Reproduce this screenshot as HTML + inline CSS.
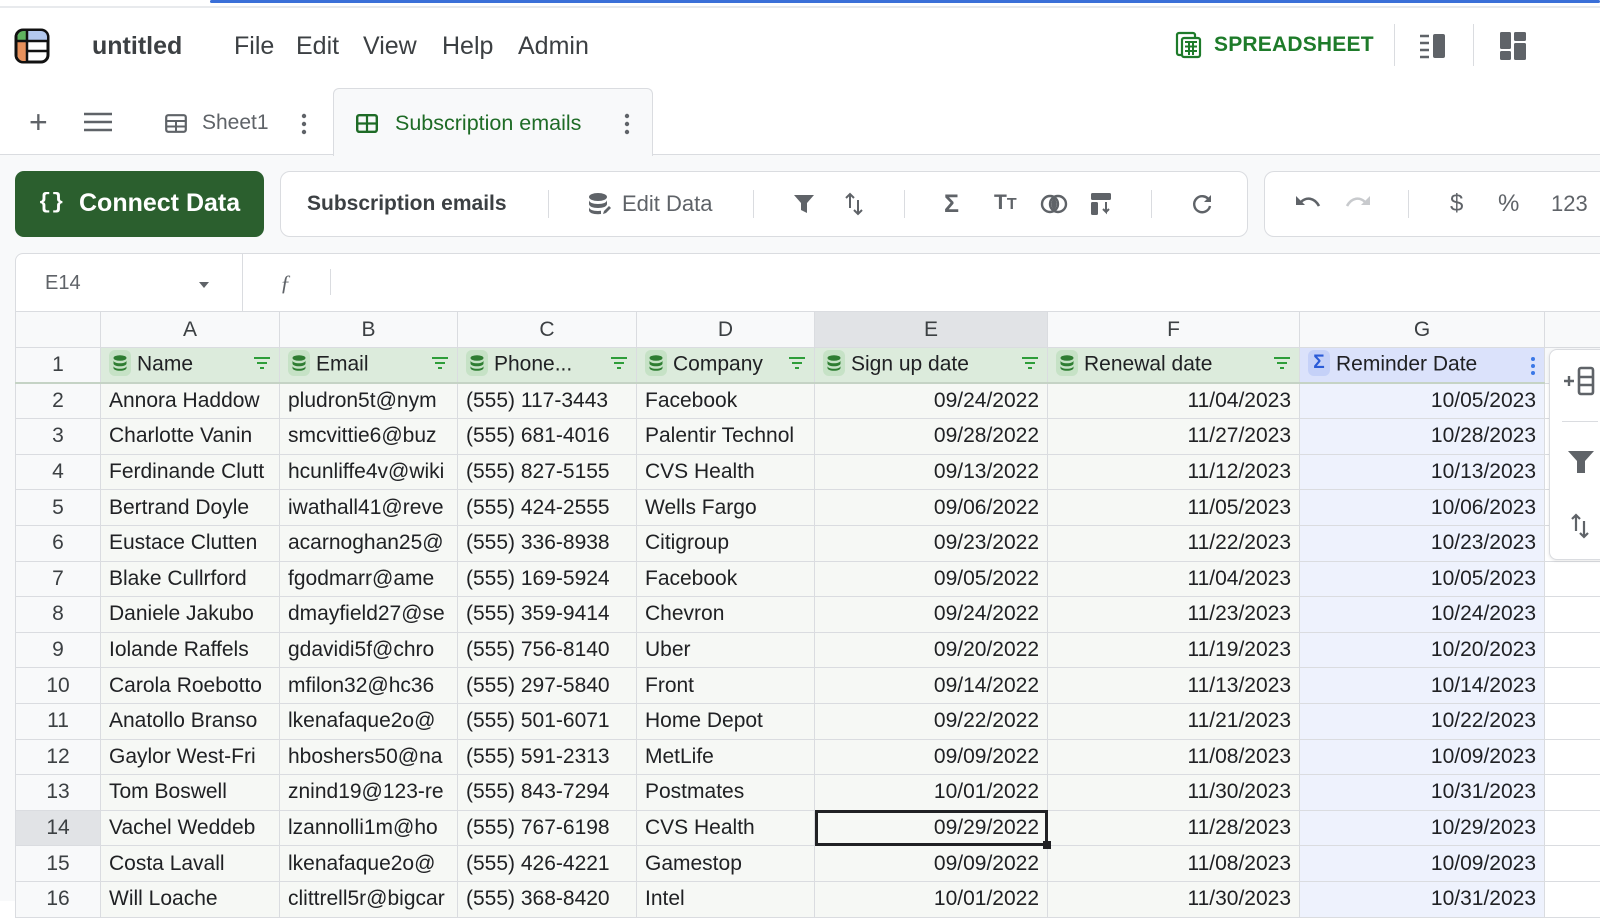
<!DOCTYPE html>
<html><head><meta charset="utf-8"><style>
*{box-sizing:border-box;margin:0;padding:0}
body{width:1600px;height:901px;overflow:hidden;background:#fff;font-family:"Liberation Sans",Arial,sans-serif;color:#202124;position:relative}
.a{position:absolute}
.menu{font-size:25px;color:#3c4043;top:32px}
.tb{color:#5f6368}
.vd{position:absolute;width:1px;background:#dadce0}
table{border-collapse:collapse;table-layout:fixed;position:absolute;left:15px;top:311px;width:1611px}
td{border:1px solid #dadce0;height:35.6px;font-size:21px;padding:0 8px;white-space:nowrap;overflow:hidden;background:#f6f8f5}
tr.ch td{background:#f8f9fa;text-align:center;height:36px;color:#3c4043}
td.rh{background:#f8f9fa;text-align:center;padding:0;color:#3c4043}
td.r{text-align:right}
td.g{background:#eef2fd}
tr.h1 td{background:#dcebdc;border-bottom:2px solid #c5d3c5}
tr.h1 td.rh{background:#f8f9fa}
tr.h1 td.gh{background:#dbe2fb}
.db{display:inline-block;width:22px;height:26px;border-radius:6px;background:#c6e2c6;vertical-align:middle;margin-right:6px;position:relative;top:-2px}
.db svg{position:absolute;left:4px;top:5px}
.flt{float:right;margin-top:4px}
</style></head><body>
<div class="a" style="left:210px;top:0;width:1390px;height:3px;background:#3a6fd8;border-radius:2px"></div>
<div class="a" style="left:0;top:6px;width:1600px;height:2px;background:#e8eaed"></div>
<svg class="a" style="left:14px;top:28px" width="36" height="36" viewBox="0 0 36 36">
<rect x="2" y="2" width="32" height="32" rx="7" fill="#fff" stroke="#111" stroke-width="3"/>
<path d="M3.5 13 V9 a6 6 0 0 1 6-6 H13 V13Z" fill="#5fb35f"/>
<path d="M13 3 H27 a6 6 0 0 1 6 6 V13 H13Z" fill="#b3c8ee"/>
<path d="M3.5 13 H13 V33 H9 a6 6 0 0 1-5.5-6Z" fill="#e8915c"/>
<path d="M13 3V34 M3 13H33 M13 23H33" stroke="#111" stroke-width="2.5"/>
</svg>
<div class="a" style="left:92px;top:32px;font-size:25px;font-weight:bold;color:#3c4043">untitled</div>
<div class="a menu" style="left:234px">File</div>
<div class="a menu" style="left:296px">Edit</div>
<div class="a menu" style="left:363px">View</div>
<div class="a menu" style="left:442px">Help</div>
<div class="a menu" style="left:518px">Admin</div>
<svg class="a" style="left:1175px;top:31px" width="28" height="28" viewBox="0 0 28 28"><rect x="2" y="2" width="18" height="22" rx="2" fill="none" stroke="#1e7b2a" stroke-width="2.2"/><rect x="7" y="7" width="18" height="19" rx="2" fill="#fff" stroke="#1e7b2a" stroke-width="2.2"/><path d="M10 11h12M10 15.5h12M10 20h12M14 11v13M18 11v13" stroke="#1e7b2a" stroke-width="2"/></svg>
<div class="a" style="left:1214px;top:33px;font-size:21px;font-weight:bold;color:#1e7b2a;letter-spacing:.2px">SPREADSHEET</div>
<div class="vd" style="left:1394px;top:24px;height:42px"></div>
<svg class="a" style="left:1419px;top:33px" width="28" height="26" viewBox="0 0 28 26"><path d="M1 3h9M1 10h9M1 17h9M1 24h9" stroke="#5f6368" stroke-width="2.4"/><rect x="14" y="1" width="12" height="24" rx="2" fill="#5f6368"/></svg>
<div class="vd" style="left:1473px;top:24px;height:42px"></div>
<svg class="a" style="left:1499px;top:31px" width="28" height="30" viewBox="0 0 28 30"><rect x="1" y="1" width="11" height="17" rx="1.5" fill="#5f6368"/><rect x="1" y="20" width="11" height="9" rx="1.5" fill="#5f6368"/><rect x="15" y="1" width="12" height="9" rx="1.5" fill="#5f6368"/><rect x="15" y="12" width="12" height="17" rx="1.5" fill="#5f6368"/></svg>
<div class="a" style="left:0;top:154px;width:1600px;height:747px;background:#f8f9fa;border-top:1px solid #dadce0"></div>
<div class="a" style="left:333px;top:88px;width:320px;height:68px;background:#f8f9fa;border:1px solid #dadce0;border-bottom:none;border-radius:6px 6px 0 0"></div>
<div class="a" style="left:29px;top:106px;font-size:32px;color:#5f6368;line-height:32px">+</div>
<svg class="a" style="left:84px;top:112px" width="28" height="20"><path d="M0 2h28M0 10h28M0 18h28" stroke="#5f6368" stroke-width="2.5"/></svg>
<svg class="a" style="left:165px;top:114px" width="22" height="19" viewBox="0 0 22 19"><rect x="1.2" y="1.2" width="19.6" height="16.6" rx="2" fill="none" stroke="#5f6368" stroke-width="2.2"/><path d="M1 7h20M11 7v11M1 12.5h20" stroke="#5f6368" stroke-width="2"/></svg>
<div class="a" style="left:202px;top:111px;font-size:21px;color:#5f6368">Sheet1</div>
<svg class="a" style="left:301px;top:113px" width="6" height="22"><circle cx="3" cy="3" r="2.2" fill="#5f6368"/><circle cx="3" cy="11" r="2.2" fill="#5f6368"/><circle cx="3" cy="19" r="2.2" fill="#5f6368"/></svg>
<svg class="a" style="left:356px;top:114px" width="22" height="19" viewBox="0 0 22 19"><rect x="1.2" y="1.2" width="19.6" height="16.6" rx="2" fill="none" stroke="#1e6b26" stroke-width="2.4"/><path d="M1 9.5h20M11 1v17" stroke="#1e6b26" stroke-width="2.2"/></svg>
<div class="a" style="left:395px;top:111px;font-size:21.5px;color:#1e6b26">Subscription emails</div>
<svg class="a" style="left:624px;top:113px" width="6" height="22"><circle cx="3" cy="3" r="2.2" fill="#5f6368"/><circle cx="3" cy="11" r="2.2" fill="#5f6368"/><circle cx="3" cy="19" r="2.2" fill="#5f6368"/></svg>
<div class="a" style="left:15px;top:171px;width:249px;height:66px;background:#2b5f2e;border-radius:9px"></div>
<div class="a" style="left:38px;top:190px;font-size:22px;color:#fff;font-weight:bold;font-family:'Liberation Mono',monospace">{}</div>
<div class="a" style="left:79px;top:189px;font-size:25px;color:#fff;font-weight:bold">Connect Data</div>
<div class="a" style="left:280px;top:171px;width:968px;height:66px;background:#fff;border:1px solid #dadce0;border-radius:10px"></div>
<div class="a" style="left:1264px;top:171px;width:360px;height:66px;background:#fff;border:1px solid #dadce0;border-radius:10px"></div>
<div class="a" style="left:307px;top:192px;font-size:21px;font-weight:bold;color:#3c4043">Subscription emails</div>
<div class="vd" style="left:548px;top:190px;height:28px"></div>
<svg class="a" style="left:588px;top:192px" width="24" height="24" viewBox="0 0 24 24"><ellipse cx="10" cy="5" rx="9" ry="4" fill="#5f6368"/><path d="M1 8c0 2.5 4 4 9 4s9-1.5 9-4v4c0 2.5-4 4-9 4s-9-1.5-9-4z M1 15c0 2.5 4 4 9 4 1 0 2 0 3-.2V22c-1 .2-2 .2-3 .2-5 0-9-1.5-9-4z" fill="#5f6368"/><path d="M15 22l1-3 5-5 2 2-5 5z" fill="#5f6368"/></svg>
<div class="a tb" style="left:622px;top:191px;font-size:22px">Edit Data</div>
<div class="vd" style="left:753px;top:190px;height:28px"></div>
<svg class="a" style="left:794px;top:194px" width="20" height="20" viewBox="0 0 20 20"><path d="M0 1h20l-7 8v10l-6-3V9z" fill="#5f6368"/></svg>
<svg class="a" style="left:845px;top:192px" width="18" height="24" viewBox="0 0 18 24"><path d="M5 16V2M1 6l4-4 4 4M13 8v14M9 18l4 4 4-4" stroke="#5f6368" stroke-width="2" fill="none"/></svg>
<div class="vd" style="left:904px;top:190px;height:28px"></div>
<div class="a tb" style="left:944px;top:190px;font-size:25px;font-weight:bold">Σ</div>
<div class="a tb" style="left:994px;top:191px;font-size:21px;font-weight:bold">T<span style="font-size:16px">T</span></div>
<svg class="a" style="left:1040px;top:193px" width="28" height="22" viewBox="0 0 28 22"><circle cx="10" cy="11" r="8" fill="none" stroke="#5f6368" stroke-width="2.4"/><circle cx="18" cy="11" r="8" fill="none" stroke="#5f6368" stroke-width="2.4"/><path d="M14 5a8 8 0 0 1 0 12a8 8 0 0 1 0-12z" fill="#5f6368"/></svg>
<svg class="a" style="left:1090px;top:192px" width="22" height="24" viewBox="0 0 22 24"><rect x="1" y="1" width="20" height="7" rx="1.5" fill="#5f6368"/><rect x="1" y="10" width="7" height="13" rx="1.5" fill="#5f6368"/><path d="M16 10v10l-3-3M16 20l3-3" stroke="#5f6368" stroke-width="2" fill="none"/></svg>
<div class="vd" style="left:1151px;top:190px;height:28px"></div>
<svg class="a" style="left:1191px;top:193px" width="22" height="22" viewBox="0 0 22 22"><path d="M18 7A8 8 0 1 0 19 13" stroke="#5f6368" stroke-width="2.4" fill="none"/><path d="M20 2v7h-7z" fill="#5f6368"/></svg>
<svg class="a" style="left:1295px;top:194px" width="26" height="18" viewBox="0 0 26 18"><path d="M6 8c5-5 13-5 18 4" stroke="#5f6368" stroke-width="2.6" fill="none"/><path d="M1 2v9h9z" fill="#5f6368"/></svg>
<svg class="a" style="left:1345px;top:194px" width="26" height="18" viewBox="0 0 26 18"><path d="M20 8c-5-5-13-5-18 4" stroke="#c8cacd" stroke-width="2.6" fill="none"/><path d="M25 2v9h-9z" fill="#c8cacd"/></svg>
<div class="vd" style="left:1408px;top:190px;height:28px"></div>
<div class="a tb" style="left:1450px;top:190px;font-size:24px">$</div>
<div class="a tb" style="left:1498px;top:190px;font-size:24px">%</div>
<div class="a tb" style="left:1551px;top:191px;font-size:22px">123</div>
<div class="a" style="left:15px;top:253px;width:1600px;height:59px;background:#fff;border:1px solid #dadce0;border-radius:8px 0 0 0"></div>
<div class="vd" style="left:242px;top:254px;height:57px"></div>
<div class="a" style="left:45px;top:272px;font-size:20px;color:#5f6368">E14</div>
<div class="a" style="left:199px;top:282px;width:0;height:0;border-left:5px solid transparent;border-right:5px solid transparent;border-top:6px solid #5f6368"></div>
<div class="a" style="left:280px;top:270px;font-size:22px;color:#5f6368;font-style:italic;font-family:'Liberation Serif',serif">ƒ</div>
<div class="vd" style="left:330px;top:269px;height:26px"></div>
<table>
<colgroup><col style="width:85px"><col style="width:179px"><col style="width:178px"><col style="width:179px"><col style="width:178px"><col style="width:233px"><col style="width:252px"><col style="width:245px"><col style="width:82px"></colgroup>
<tr class="ch"><td class="rh"></td><td>A</td><td>B</td><td>C</td><td>D</td><td style="background:#e1e3e6">E</td><td>F</td><td>G</td><td></td></tr>
<tr class="h1"><td class="rh">1</td>
<td><span class="db"><svg width="14" height="16" viewBox="0 0 14 16"><ellipse cx="7" cy="3" rx="6.5" ry="2.8" fill="#2e7d32"/><path d="M.5 5.5c0 1.6 3 2.8 6.5 2.8s6.5-1.2 6.5-2.8v3c0 1.6-3 2.8-6.5 2.8S.5 10.1.5 8.5zM.5 11c0 1.6 3 2.8 6.5 2.8s6.5-1.2 6.5-2.8v2c0 1.6-3 2.8-6.5 2.8S.5 14.6.5 13z" fill="#2e7d32"/></svg></span>Name<svg class="flt" width="18" height="14"><path d="M1 2h16M4 7h10M7 12h4" stroke="#2e9d3a" stroke-width="2"/></svg></td>
<td><span class="db"><svg width="14" height="16" viewBox="0 0 14 16"><ellipse cx="7" cy="3" rx="6.5" ry="2.8" fill="#2e7d32"/><path d="M.5 5.5c0 1.6 3 2.8 6.5 2.8s6.5-1.2 6.5-2.8v3c0 1.6-3 2.8-6.5 2.8S.5 10.1.5 8.5zM.5 11c0 1.6 3 2.8 6.5 2.8s6.5-1.2 6.5-2.8v2c0 1.6-3 2.8-6.5 2.8S.5 14.6.5 13z" fill="#2e7d32"/></svg></span>Email<svg class="flt" width="18" height="14"><path d="M1 2h16M4 7h10M7 12h4" stroke="#2e9d3a" stroke-width="2"/></svg></td>
<td><span class="db"><svg width="14" height="16" viewBox="0 0 14 16"><ellipse cx="7" cy="3" rx="6.5" ry="2.8" fill="#2e7d32"/><path d="M.5 5.5c0 1.6 3 2.8 6.5 2.8s6.5-1.2 6.5-2.8v3c0 1.6-3 2.8-6.5 2.8S.5 10.1.5 8.5zM.5 11c0 1.6 3 2.8 6.5 2.8s6.5-1.2 6.5-2.8v2c0 1.6-3 2.8-6.5 2.8S.5 14.6.5 13z" fill="#2e7d32"/></svg></span>Phone...<svg class="flt" width="18" height="14"><path d="M1 2h16M4 7h10M7 12h4" stroke="#2e9d3a" stroke-width="2"/></svg></td>
<td><span class="db"><svg width="14" height="16" viewBox="0 0 14 16"><ellipse cx="7" cy="3" rx="6.5" ry="2.8" fill="#2e7d32"/><path d="M.5 5.5c0 1.6 3 2.8 6.5 2.8s6.5-1.2 6.5-2.8v3c0 1.6-3 2.8-6.5 2.8S.5 10.1.5 8.5zM.5 11c0 1.6 3 2.8 6.5 2.8s6.5-1.2 6.5-2.8v2c0 1.6-3 2.8-6.5 2.8S.5 14.6.5 13z" fill="#2e7d32"/></svg></span>Company<svg class="flt" width="18" height="14"><path d="M1 2h16M4 7h10M7 12h4" stroke="#2e9d3a" stroke-width="2"/></svg></td>
<td><span class="db"><svg width="14" height="16" viewBox="0 0 14 16"><ellipse cx="7" cy="3" rx="6.5" ry="2.8" fill="#2e7d32"/><path d="M.5 5.5c0 1.6 3 2.8 6.5 2.8s6.5-1.2 6.5-2.8v3c0 1.6-3 2.8-6.5 2.8S.5 10.1.5 8.5zM.5 11c0 1.6 3 2.8 6.5 2.8s6.5-1.2 6.5-2.8v2c0 1.6-3 2.8-6.5 2.8S.5 14.6.5 13z" fill="#2e7d32"/></svg></span>Sign up date<svg class="flt" width="18" height="14"><path d="M1 2h16M4 7h10M7 12h4" stroke="#2e9d3a" stroke-width="2"/></svg></td>
<td><span class="db"><svg width="14" height="16" viewBox="0 0 14 16"><ellipse cx="7" cy="3" rx="6.5" ry="2.8" fill="#2e7d32"/><path d="M.5 5.5c0 1.6 3 2.8 6.5 2.8s6.5-1.2 6.5-2.8v3c0 1.6-3 2.8-6.5 2.8S.5 10.1.5 8.5zM.5 11c0 1.6 3 2.8 6.5 2.8s6.5-1.2 6.5-2.8v2c0 1.6-3 2.8-6.5 2.8S.5 14.6.5 13z" fill="#2e7d32"/></svg></span>Renewal date<svg class="flt" width="18" height="14"><path d="M1 2h16M4 7h10M7 12h4" stroke="#2e9d3a" stroke-width="2"/></svg></td>
<td class="gh"><span class="db" style="background:#c5d1f8;color:#2a5bd7;text-align:center;font-weight:bold;font-size:19px;line-height:26px">Σ</span>Reminder Date<svg class="flt" width="6" height="20"><circle cx="3" cy="3" r="2" fill="#3b78e7"/><circle cx="3" cy="10" r="2" fill="#3b78e7"/><circle cx="3" cy="17" r="2" fill="#3b78e7"/></svg></td>
<td style="background:#f8f9fa;border:none"></td></tr>
<tr><td class="rh">2</td><td>Annora Haddow</td><td>pludron5t@nym</td><td>(555) 117-3443</td><td>Facebook</td><td class="r">09/24/2022</td><td class="r">11/04/2023</td><td class="r g">10/05/2023</td><td style="background:#fff"></td></tr>
<tr><td class="rh">3</td><td>Charlotte Vanin</td><td>smcvittie6@buz</td><td>(555) 681-4016</td><td>Palentir Technol</td><td class="r">09/28/2022</td><td class="r">11/27/2023</td><td class="r g">10/28/2023</td><td style="background:#fff"></td></tr>
<tr><td class="rh">4</td><td>Ferdinande Clutt</td><td>hcunliffe4v@wiki</td><td>(555) 827-5155</td><td>CVS Health</td><td class="r">09/13/2022</td><td class="r">11/12/2023</td><td class="r g">10/13/2023</td><td style="background:#fff"></td></tr>
<tr><td class="rh">5</td><td>Bertrand Doyle</td><td>iwathall41@reve</td><td>(555) 424-2555</td><td>Wells Fargo</td><td class="r">09/06/2022</td><td class="r">11/05/2023</td><td class="r g">10/06/2023</td><td style="background:#fff"></td></tr>
<tr><td class="rh">6</td><td>Eustace Clutten</td><td>acarnoghan25@</td><td>(555) 336-8938</td><td>Citigroup</td><td class="r">09/23/2022</td><td class="r">11/22/2023</td><td class="r g">10/23/2023</td><td style="background:#fff"></td></tr>
<tr><td class="rh">7</td><td>Blake Cullrford</td><td>fgodmarr@ame</td><td>(555) 169-5924</td><td>Facebook</td><td class="r">09/05/2022</td><td class="r">11/04/2023</td><td class="r g">10/05/2023</td><td style="background:#fff"></td></tr>
<tr><td class="rh">8</td><td>Daniele Jakubo</td><td>dmayfield27@se</td><td>(555) 359-9414</td><td>Chevron</td><td class="r">09/24/2022</td><td class="r">11/23/2023</td><td class="r g">10/24/2023</td><td style="background:#fff"></td></tr>
<tr><td class="rh">9</td><td>Iolande Raffels</td><td>gdavidi5f@chro</td><td>(555) 756-8140</td><td>Uber</td><td class="r">09/20/2022</td><td class="r">11/19/2023</td><td class="r g">10/20/2023</td><td style="background:#fff"></td></tr>
<tr><td class="rh">10</td><td>Carola Roebotto</td><td>mfilon32@hc36</td><td>(555) 297-5840</td><td>Front</td><td class="r">09/14/2022</td><td class="r">11/13/2023</td><td class="r g">10/14/2023</td><td style="background:#fff"></td></tr>
<tr><td class="rh">11</td><td>Anatollo Branso</td><td>lkenafaque2o@</td><td>(555) 501-6071</td><td>Home Depot</td><td class="r">09/22/2022</td><td class="r">11/21/2023</td><td class="r g">10/22/2023</td><td style="background:#fff"></td></tr>
<tr><td class="rh">12</td><td>Gaylor West-Fri</td><td>hboshers50@na</td><td>(555) 591-2313</td><td>MetLife</td><td class="r">09/09/2022</td><td class="r">11/08/2023</td><td class="r g">10/09/2023</td><td style="background:#fff"></td></tr>
<tr><td class="rh">13</td><td>Tom Boswell</td><td>znind19@123-re</td><td>(555) 843-7294</td><td>Postmates</td><td class="r">10/01/2022</td><td class="r">11/30/2023</td><td class="r g">10/31/2023</td><td style="background:#fff"></td></tr>
<tr><td class="rh" style="background:#e1e3e6">14</td><td>Vachel Weddeb</td><td>lzannolli1m@ho</td><td>(555) 767-6198</td><td>CVS Health</td><td class="r" style="outline:3px solid #202124;outline-offset:-3px">09/29/2022</td><td class="r">11/28/2023</td><td class="r g">10/29/2023</td><td style="background:#fff"></td></tr>
<tr><td class="rh">15</td><td>Costa Lavall</td><td>lkenafaque2o@</td><td>(555) 426-4221</td><td>Gamestop</td><td class="r">09/09/2022</td><td class="r">11/08/2023</td><td class="r g">10/09/2023</td><td style="background:#fff"></td></tr>
<tr><td class="rh">16</td><td>Will Loache</td><td>clittrell5r@bigcar</td><td>(555) 368-8420</td><td>Intel</td><td class="r">10/01/2022</td><td class="r">11/30/2023</td><td class="r g">10/31/2023</td><td style="background:#fff"></td></tr>
</table>
<div class="a" style="left:1043px;top:841px;width:8px;height:8px;background:#202124"></div>
<div class="a" style="left:1549px;top:349px;width:70px;height:211px;background:#fff;border:1px solid #dadce0;border-radius:8px;box-shadow:0 1px 3px rgba(0,0,0,.1)"></div>
<svg class="a" style="left:1563px;top:366px" width="34" height="30" viewBox="0 0 34 30"><path d="M1 15h10M6 10v10" stroke="#5f6368" stroke-width="2.4"/><rect x="16" y="2" width="14" height="26" rx="2" fill="none" stroke="#5f6368" stroke-width="2.6"/><path d="M16 11h14M16 19h14" stroke="#5f6368" stroke-width="2.4"/></svg>
<div class="a" style="left:1562px;top:421px;width:36px;height:1px;background:#dadce0"></div>
<svg class="a" style="left:1568px;top:450px" width="26" height="24" viewBox="0 0 26 24"><path d="M0 1h26l-9 10v12h-8V11z" fill="#5f6368"/></svg>
<svg class="a" style="left:1571px;top:513px" width="18" height="26" viewBox="0 0 18 26"><path d="M5 18V2M1 6l4-4 4 4M13 8v16M9 20l4 4 4-4" stroke="#5f6368" stroke-width="2.2" fill="none"/></svg>
</body></html>
